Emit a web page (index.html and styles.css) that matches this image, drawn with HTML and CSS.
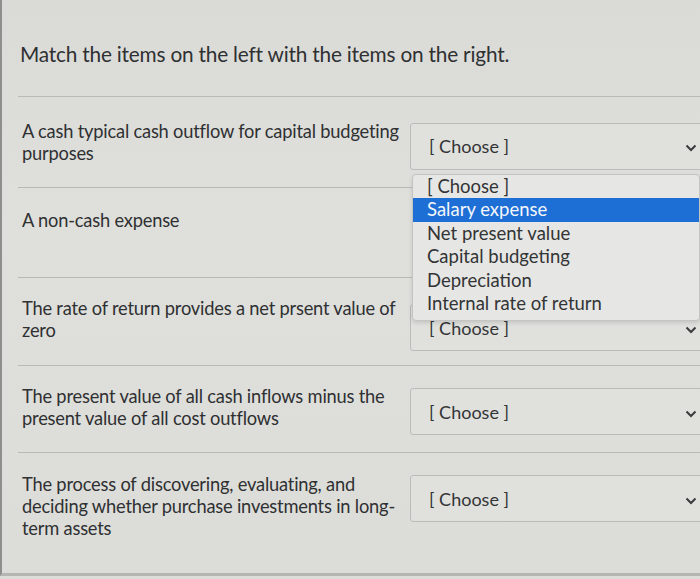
FILE: index.html
```html
<!DOCTYPE html>
<html>
<head>
<meta charset="utf-8">
<link rel="stylesheet" href="styles.css">
</head>
<body>
<div class="page">
  <h1 class="title">Match the items on the left with the items on the right.</h1>
  <div class="rows">
    <div class="row">
      <div class="prompt">A cash typical cash outflow for capital budgeting purposes</div>
      <div class="cell">
        <div class="select"><span>[ Choose ]</span><svg class="chev" viewBox="0 0 12 8"><path d="M1.5 1.5 L6 6 L10.5 1.5"/></svg></div>
        <ul class="menu">
          <li>[ Choose ]</li>
          <li class="active">Salary expense</li>
          <li>Net present value</li>
          <li>Capital budgeting</li>
          <li>Depreciation</li>
          <li>Internal rate of return</li>
        </ul>
      </div>
    </div>
    <div class="row">
      <div class="prompt">A non-cash expense</div>
      <div class="cell"></div>
    </div>
    <div class="row">
      <div class="prompt">The rate of return provides a net prsent value of zero</div>
      <div class="cell">
        <div class="select"><span>[ Choose ]</span><svg class="chev" viewBox="0 0 12 8"><path d="M1.5 1.5 L6 6 L10.5 1.5"/></svg></div>
      </div>
    </div>
    <div class="row">
      <div class="prompt">The present value of all cash inflows minus the present value of all cost outflows</div>
      <div class="cell">
        <div class="select"><span>[ Choose ]</span><svg class="chev" viewBox="0 0 12 8"><path d="M1.5 1.5 L6 6 L10.5 1.5"/></svg></div>
      </div>
    </div>
    <div class="row last">
      <div class="prompt">The process of discovering, evaluating, and deciding whether purchase investments in long-term assets</div>
      <div class="cell">
        <div class="select"><span>[ Choose ]</span><svg class="chev" viewBox="0 0 12 8"><path d="M1.5 1.5 L6 6 L10.5 1.5"/></svg></div>
      </div>
    </div>
  </div>
</div>
</body>
</html>
```

FILE: styles.css
```css
html, body {
  margin: 0;
  padding: 0;
  background: #dcddd9;
}
body {
  width: 700px;
  height: 579px;
  overflow: hidden;
  font-family: Lato, "Open Sans", sans-serif;
  color: #2f3032;
}
.page {
  height: 576px;
  border-left: 2px solid #8e8f8c;
  border-bottom: 3px solid #b5b6b2;
  box-sizing: border-box;
  background: linear-gradient(180deg, #dadbd7 0%, #dfe0dc 40%, #dcddd9 100%);
}
.title {
  margin: 0;
  padding: 40px 0 0 18px;
  box-sizing: border-box;
  height: 96px;
  font-size: 20.8px;
  font-weight: 400;
  letter-spacing: -0.2px;
  line-height: 28px;
}
.rows {
  margin-left: 16px;
  border-top: 1px solid #b8bab6;
}
.row {
  display: grid;
  grid-template-columns: 392px 300px;
  align-items: center;
  height: 89px;
  border-bottom: 1px solid #b8bab6;
}
.row:nth-child(1) { height: 90px; }
.row:nth-child(2) .prompt { align-self: start; padding-top: 21px; }
.row:nth-child(3) { height: 87px; }
.row:nth-child(3) .prompt { margin-top: -6px; }
.row:nth-child(3) .select { margin-top: 12px; }
.row:nth-child(4) { height: 86px; }
.row:nth-child(4) .prompt { margin-top: -4px; }
.row:nth-child(4) .select { margin-top: 5px; }
.row.last {
  border-bottom: none;
  height: 100px;
  align-items: start;
  padding-top: 20px;
  box-sizing: border-box;
}
.row.last .select { margin-top: 2px; }
.prompt {
  padding-left: 4px;
  font-size: 18.3px;
  line-height: 22px;
  letter-spacing: -0.2px;
}
.cell {
  position: relative;
}
.select {
  display: flex;
  align-items: center;
  justify-content: space-between;
  height: 47px;
  box-sizing: border-box;
  padding: 0 12px 0 18px;
  border: 1px solid #bbbcb9;
  border-radius: 3px;
  background: #e0e1dd;
  font-size: 18px;
  color: #333436;
}
.row:nth-child(1) .select { margin-top: 8px; }
.chev {
  width: 12px;
  height: 8px;
  margin-top: 4px;
  fill: none;
  stroke: #3a3b3d;
  stroke-width: 2;
}
.menu {
  position: absolute;
  left: 2px;
  top: 59px;
  width: 286px;
  margin: 0;
  padding: 0 0 4px 0;
  list-style: none;
  background: #e6e7e4;
  border: 1px solid #c4c5c2;
  border-radius: 4px;
  box-shadow: 0 2px 4px rgba(0,0,0,0.12);
  z-index: 2;
  font-size: 18.5px;
  line-height: 23.6px;
  color: #333436;
}
.menu li {
  padding-left: 14px;
}
.menu li.active {
  background: #1d6fd6;
  color: #f4f6fa;
}
```
